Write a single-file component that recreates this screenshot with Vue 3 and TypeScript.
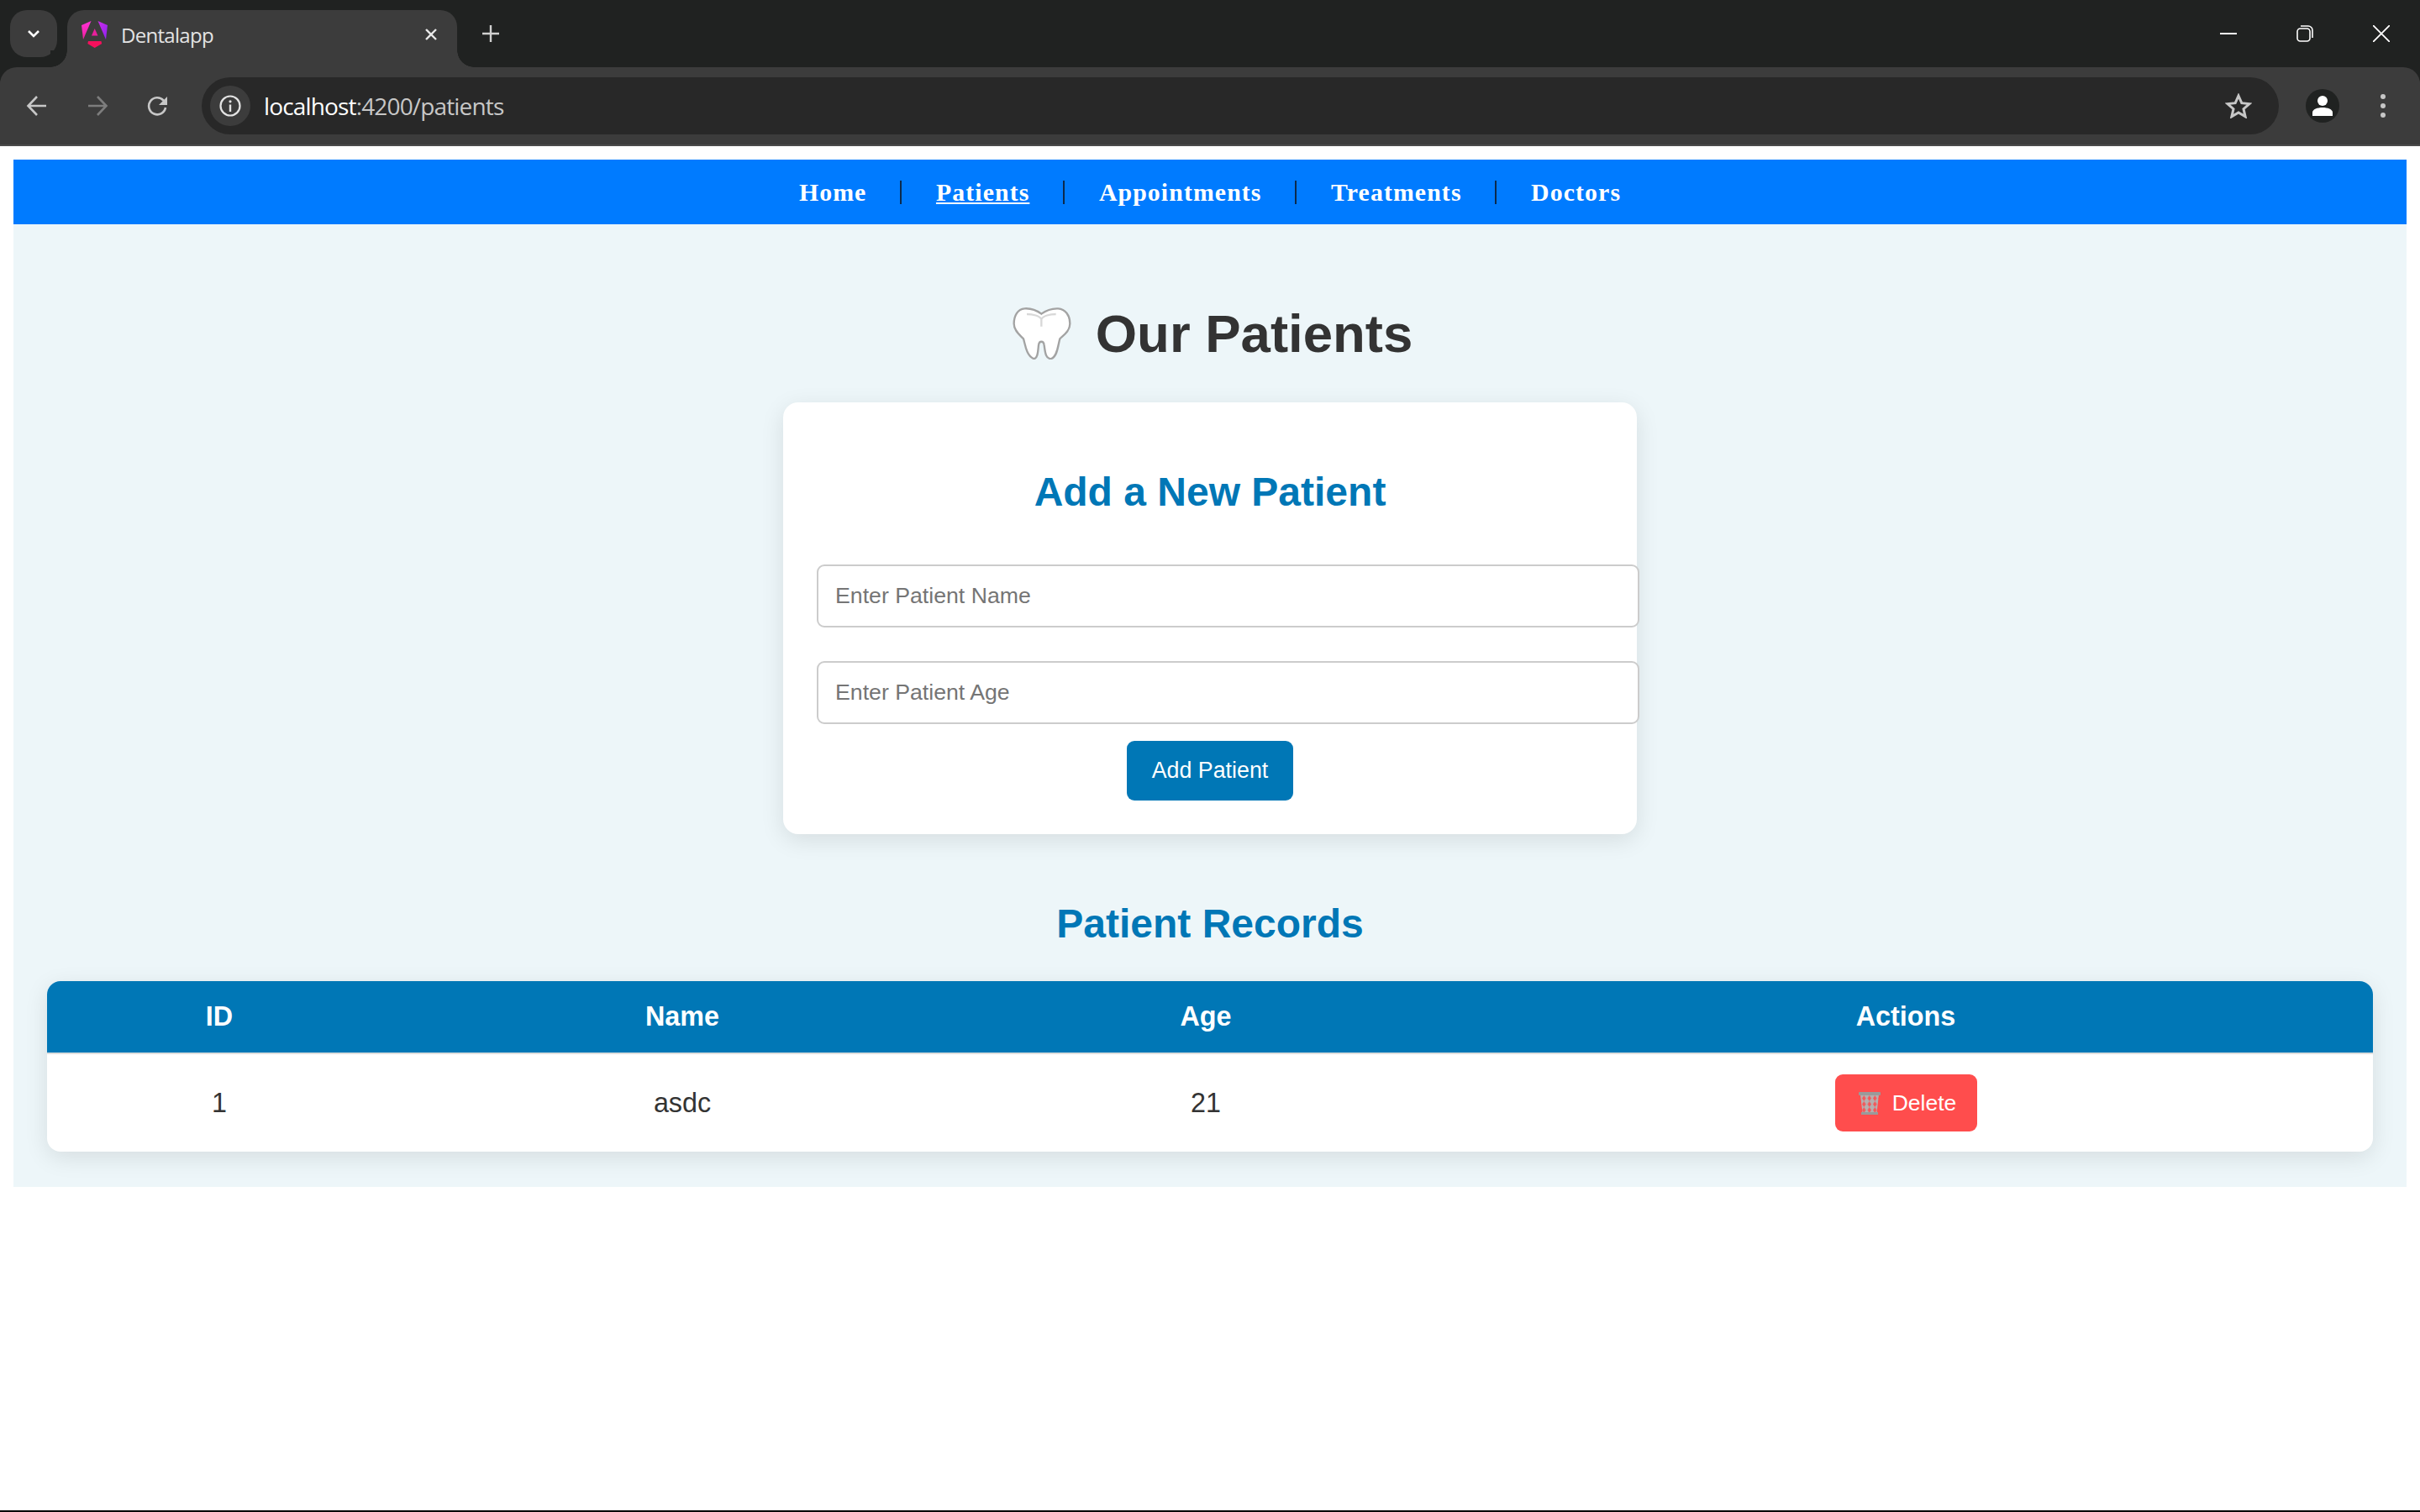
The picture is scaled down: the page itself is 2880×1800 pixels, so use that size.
<script setup lang="ts">
type Patient = { id: number; name: string; age: number };

const links = ['Home', 'Patients', 'Appointments', 'Treatments', 'Doctors'];
const patients: Patient[] = [{ id: 1, name: 'asdc', age: 21 }];
</script>

<template>
  <div class="screen">
    <header class="browser">
      <div class="tabstrip">
        <button class="tab-search" type="button" aria-label="Search tabs">
          <svg width="20" height="20" viewBox="0 0 20 20"><path d="M4 7l6 6 6-6" fill="none" stroke="#fff" stroke-width="2.6" /></svg>
        </button>
        <div class="tab">
          <svg class="favicon" width="32" height="34" viewBox="0 0 32 34">
            <defs>
              <linearGradient id="ng-left" x1="0" y1="0" x2="0" y2="1">
                <stop offset="0" stop-color="#ff31d9" />
                <stop offset="1" stop-color="#f0209c" />
              </linearGradient>
              <linearGradient id="ng-right" x1="0" y1="0" x2="1" y2="1">
                <stop offset="0" stop-color="#d02be8" />
                <stop offset="1" stop-color="#8a24f0" />
              </linearGradient>
            </defs>
            <path d="M11.500 1L0 6l2 17z" fill="url(#ng-left)" />
            <path d="M19.500 1L31 6l-2 17z" fill="url(#ng-right)" />
            <path d="M15.700 10l3.800 8.500H12z" fill="#e8209c" />
            <path d="M8 25h15.400l.8 3-8.500 5-8.400-5z" fill="#f5105c" />
          </svg>
          <span class="tab-title">Dentalapp</span>
          <svg class="tab-close" width="18" height="18" viewBox="0 0 18 18"><path d="M3 3l12 12M15 3L3 15" stroke="#e8e8e8" stroke-width="2.4" /></svg>
        </div>
        <svg class="new-tab" width="22" height="22" viewBox="0 0 22 22"><path d="M11 1v20M1 11h20" stroke="#d0d0d0" stroke-width="2.4" /></svg>
        <div class="win-controls">
          <svg width="20" height="20" viewBox="0 0 20 20"><path d="M0 10h20" stroke="#fff" stroke-width="2" /></svg>
          <svg width="20" height="20" viewBox="0 0 20 20"><rect x="1" y="4" width="15" height="15" rx="3.5" fill="none" stroke="#fff" stroke-width="1.6" /><path d="M5 1h9a5 5 0 0 1 5 5v9" fill="none" stroke="#fff" stroke-width="1.6" /></svg>
          <svg width="20" height="20" viewBox="0 0 20 20"><path d="M0 0l20 20M20 0L0 20" stroke="#fff" stroke-width="1.8" /></svg>
        </div>
      </div>
      <div class="toolbar">
        <svg class="nav-icon" width="26" height="26" viewBox="0 0 26 26"><path d="M24 13H3M13 2L2.500 13 13 24" fill="none" stroke="#c7c7c7" stroke-width="2.600" /></svg>
        <svg class="nav-icon" width="26" height="26" viewBox="0 0 26 26"><path d="M2 13h21M13 2l10.500 11L13 24" fill="none" stroke="#7d7d7d" stroke-width="2.600" /></svg>
        <svg class="nav-icon" width="26" height="26" viewBox="0 0 26 26"><path d="M22 15a10 10 0 1 1-2.500-8.500L23 10" fill="none" stroke="#c7c7c7" stroke-width="2.600" /><path d="M24 2v10H14z" fill="#c7c7c7" /></svg>
        <div class="omnibox">
          <span class="site-info">
            <svg width="26" height="26" viewBox="0 0 26 26"><circle cx="13" cy="13" r="11.500" fill="none" stroke="#e3e3e3" stroke-width="2.200" /><path d="M13 11.500V20" stroke="#e3e3e3" stroke-width="2.400" /><circle cx="13" cy="7.800" r="1.600" fill="#e3e3e3" /></svg>
          </span>
          <span class="url"><span class="url-host">localhost</span>:4200/patients</span>
          <svg class="star" width="32" height="30" viewBox="0 0 32 30"><path d="M16 3l3.800 8.700 9.200.9-7 6.100 2.100 9.100-8.100-4.800-8.100 4.800 2.100-9.100-7-6.100 9.200-.9z" fill="none" stroke="#c7c7c7" stroke-width="3" /></svg>
        </div>
        <span class="avatar">
          <svg width="26" height="26" viewBox="0 0 26 26"><circle cx="13" cy="7" r="6" fill="#fff" /><path d="M1 25v-4c0-4 6-6 12-6s12 2 12 6v4z" fill="#fff" /></svg>
        </span>
        <svg class="menu" width="8" height="28" viewBox="0 0 8 28"><circle cx="4" cy="3" r="3" fill="#c7c7c7" /><circle cx="4" cy="14" r="3" fill="#c7c7c7" /><circle cx="4" cy="25" r="3" fill="#c7c7c7" /></svg>
      </div>
    </header>

    <div class="page">
      <nav class="topnav">
        <a v-for="link in links" :key="link" class="topnav-link" :class="{ active: link === 'Patients' }">{{ link }}</a>
      </nav>

      <main class="patients">
        <h1 class="page-title">
          <svg class="tooth" width="82" height="62" viewBox="-21 0 246 186">
            <path d="M100 23C80 8 55 3 40 4 15 6 2 30 2 58c0 27 23 42 34 54 6 18 9 58 36 71 16 3 16-33 18-48 2-17 18-17 20 0 3 20 4 51 26 48 22-8 24-53 30-71 12-12 36-27 36-54 0-30-17-52-42-54-20-1-40 4-60 19z" fill="#fff" stroke="#a3a3a3" stroke-width="7" />
            <path d="M48 24c22 0 46 6 52 18 6-12 30-18 52-18M100 42v26" fill="none" stroke="#d8d8d8" stroke-width="7" />
          </svg>
          Our Patients
        </h1>

        <section class="add-card">
          <h2 class="section-title card-title">Add a New Patient</h2>
          <input class="field" type="text" placeholder="Enter Patient Name" />
          <input class="field" type="text" placeholder="Enter Patient Age" />
          <button class="add-btn" type="button">Add Patient</button>
        </section>

        <h2 class="section-title records-title">Patient Records</h2>

        <div class="table-wrap">
          <table class="records">
            <colgroup>
              <col class="col-id" />
              <col class="col-name" />
              <col class="col-age" />
              <col />
            </colgroup>
            <thead>
              <tr>
                <th>ID</th>
                <th>Name</th>
                <th>Age</th>
                <th>Actions</th>
              </tr>
            </thead>
            <tbody>
              <tr v-for="p in patients" :key="p.id">
                <td>{{ p.id }}</td>
                <td>{{ p.name }}</td>
                <td>{{ p.age }}</td>
                <td>
                  <button class="delete-btn" type="button">
                    <svg width="26" height="27" viewBox="0 0 26 27">
                      <defs>
                        <pattern id="mesh" x="3" y="4" width="6.500" height="7" patternUnits="userSpaceOnUse">
                          <rect width="6.500" height="7" fill="#b5b0b0" />
                          <path d="M3.250 0L5.500 3.500 3.250 7 1 3.500z" fill="#f4585a" />
                        </pattern>
                      </defs>
                      <path d="M2 3h22l-2.500 22h-17z" fill="url(#mesh)" />
                      <rect x="0" y="0" width="26" height="4" rx="1" fill="#9a9a9a" />
                      <rect x="3" y="24" width="20" height="3" fill="#9a9a9a" />
                    </svg>
                    <span>Delete</span>
                  </button>
                </td>
              </tr>
            </tbody>
          </table>
        </div>
      </main>
    </div>
  </div>
</template>

<style scoped>
.screen {
  height: 1800px;
  display: flex;
  flex-direction: column;
  box-sizing: border-box;
  border-bottom: 2px solid #000;
  font-family: 'Liberation Sans', Arial, sans-serif;
}

/* browser frame */
.browser {
  background: #202221;
  flex: none;
}

.tabstrip {
  height: 80px;
  display: flex;
  align-items: flex-start;
  padding: 12px 36px 0 12px;
  box-sizing: border-box;
}

.tab-search {
  width: 56px;
  height: 56px;
  margin: 0 12px 0 0;
  padding: 0;
  border: 0;
  border-radius: 20px;
  background: #3c3c3c;
  display: flex;
  align-items: center;
  justify-content: center;
}

.tab {
  position: relative;
  width: 464px;
  height: 68px;
  background: #3c3c3c;
  border-radius: 20px 20px 0 0;
  display: flex;
  align-items: center;
  padding: 0 22px 10px 17px;
  box-sizing: border-box;
}

.tab::before,
.tab::after {
  content: '';
  position: absolute;
  bottom: 0;
  width: 20px;
  height: 20px;
  background: radial-gradient(circle at 0 0, #202221 19.500px, #3c3c3c 20px);
}

.tab::before {
  left: -20px;
}

.tab::after {
  right: -20px;
  transform: scaleX(-1);
}

.favicon {
  flex: none;
}

.tab-title {
  margin-left: 15px;
  flex: 1;
  font: 24px 'Open Sans', sans-serif;
  letter-spacing: -0.7px;
  color: #e3e3e3;
}

.new-tab {
  margin: 17px 0 0 29px;
}

.win-controls {
  margin: 18px 0 0 auto;
  display: flex;
  gap: 71px;
}

.toolbar {
  height: 92px;
  margin-bottom: 2px;
  background: #3c3c3c;
  border-radius: 20px 20px 0 0;
  display: flex;
  align-items: center;
  padding-left: 31px;
  box-shadow: 0 2px 0 #4b4b4b;
}

.nav-icon {
  margin-right: 46px;
  flex: none;
}

.nav-icon:nth-child(3) {
  margin-right: 39px;
}

.omnibox {
  width: 2472px;
  height: 68px;
  border-radius: 34px;
  background: #282828;
  display: flex;
  align-items: center;
  padding: 0 32px 0 10px;
  box-sizing: border-box;
}

.site-info {
  width: 48px;
  height: 48px;
  border-radius: 50%;
  background: #3c3c3c;
  display: flex;
  align-items: center;
  justify-content: center;
}

.url {
  margin-left: 16px;
  flex: 1;
  font: 28px 'Open Sans', sans-serif;
  letter-spacing: -0.85px;
  color: #c7c7c7;
}

.url-host {
  color: #fff;
}

.avatar {
  width: 40px;
  height: 40px;
  margin-left: 32px;
  border-radius: 50%;
  background: #202221;
  display: flex;
  align-items: center;
  justify-content: center;
}

.menu {
  margin-left: 48px;
}

/* app */
.page {
  padding: 16px 16px 0;
}

.topnav {
  height: 77px;
  background: #007bff;
  display: flex;
  align-items: center;
  justify-content: center;
  gap: 41px;
}

.topnav-link {
  font-family: 'Liberation Serif', 'Times New Roman', serif;
  font-weight: 700;
  font-size: 29.800px;
  letter-spacing: 1.100px;
  color: #fff;
}

.topnav-link:not(:last-child) {
  padding-right: 39.500px;
  border-right: 2px solid #0c2a4d;
  line-height: 28px;
}

.topnav-link.active {
  text-decoration: underline;
}

.patients {
  background: #edf6f9;
  padding: 93px 40px 42px;
}

.page-title {
  margin: 0 0 45px;
  display: flex;
  align-items: center;
  justify-content: center;
  gap: 23px;
  font-size: 63.500px;
  line-height: 74px;
  color: #333;
}

.add-card {
  width: 1016px;
  margin: 0 auto;
  padding: 40px;
  box-sizing: border-box;
  background: #fff;
  border-radius: 18px;
  box-shadow: 0 7px 28px rgba(0, 0, 0, 0.1);
  text-align: center;
}

.section-title {
  margin: 0;
  font-size: 48px;
  line-height: 55px;
  color: #0077b6;
  text-align: center;
}

.card-title {
  margin: 39px 0 59px;
}

.records-title {
  margin: 79px 0 41px;
}

.field {
  display: block;
  width: calc(100% + 43px);
  height: 75px;
  margin-bottom: 40px;
  padding: 0 20px;
  box-sizing: border-box;
  border: 2px solid #ccc;
  border-radius: 9px;
  background: #fff;
  font: 26.700px 'Liberation Sans', Arial, sans-serif;
}

.field:nth-of-type(2) {
  margin-bottom: 20px;
}

.add-btn {
  width: 198px;
  height: 71px;
  padding: 0;
  border: 0;
  border-radius: 9px;
  background: #0077b6;
  color: #fff;
  font: 26.800px 'Liberation Sans', Arial, sans-serif;
  display: block;
  margin: 0 auto;
}

.table-wrap {
  border-radius: 16px;
  overflow: hidden;
  box-shadow: 0 7px 28px rgba(0, 0, 0, 0.1);
  background: #fff;
}

.records {
  width: 100%;
  table-layout: fixed;
  border-collapse: collapse;
  font-size: 32.300px;
  text-align: center;
  color: #333;
}

.col-id {
  width: 410px;
}

.col-name {
  width: 692px;
}

.col-age {
  width: 554px;
}

.records th {
  height: 85px;
  padding: 0;
  background: #0077b6;
  color: #fff;
  font-weight: 700;
  border-bottom: 2px solid #ddd;
}

.records td {
  height: 116px;
  padding: 0;
}

.delete-btn {
  width: 169px;
  height: 68px;
  padding: 1px 0 0 4px;
  border: 0;
  border-radius: 9px;
  background: #ff4d4d;
  color: #fff;
  font: 26.500px 'Liberation Sans', Arial, sans-serif;
  display: inline-flex;
  align-items: center;
  justify-content: center;
  gap: 14px;
  vertical-align: middle;
}
</style>

<style>
body {
  margin: 0;
  background: #fff;
}
</style>
